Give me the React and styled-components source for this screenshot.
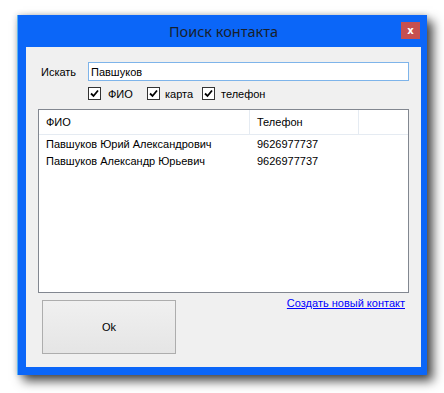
import React from "react";
import styled, { createGlobalStyle } from "styled-components";

const GlobalStyle = createGlobalStyle`
  html, body {
    margin: 0;
    padding: 0;
    background: #ffffff;
  }
  body {
    font-family: "Liberation Sans", Arial, sans-serif;
    font-size: 11px;
    color: #000;
  }
`;

const Desktop = styled.div`
  width: 444px;
  height: 393px;
  padding: 15px 0 0 17px;
  box-sizing: border-box;
  overflow: hidden;
`;

const Window = styled.div`
  width: 410px;
  height: 360px;
  background: #0b66f8;
  display: flex;
  flex-direction: column;
  border-left: 1px solid #5ab4f0;
  box-sizing: border-box;
  box-shadow: 6px 6px 10px rgba(0, 0, 0, 0.7), 0 0 6px rgba(0, 0, 0, 0.2);
`;

const TitleBar = styled.div`
  height: 32px;
  position: relative;
  display: flex;
  align-items: center;
  justify-content: center;
`;

const Title = styled.span`
  font-family: "Segoe UI", "Noto Sans", sans-serif;
  font-size: 14.5px;
  color: #18202c;
  margin-left: 2px;
`;

const CloseButton = styled.div`
  position: absolute;
  right: 7px;
  top: 7px;
  width: 19px;
  height: 17px;
  background: #c75050;
  color: #fff;
  font-family: "DejaVu Sans", sans-serif;
  font-weight: bold;
  font-size: 10px;
  display: flex;
  align-items: center;
  justify-content: center;
`;

const Client = styled.div`
  flex: 1;
  margin: 0 6px 8px 8px;
  background: #f0f0f0;
  padding-top: 15px;
  display: flex;
  flex-direction: column;
`;

const SearchRow = styled.div`
  display: flex;
  align-items: center;
  padding-left: 15px;
`;

const Label = styled.span`
  width: 47px;
`;

const SearchInput = styled.div`
  width: 321px;
  height: 19px;
  box-sizing: border-box;
  border: 1px solid #7eb4ea;
  background: #fff;
  padding-left: 2px;
  display: flex;
  align-items: center;
`;

const CheckRow = styled.div`
  display: flex;
  margin-top: 6px;
  padding-left: 62px;
  height: 13px;
`;

const CheckItem = styled.div`
  display: flex;
  align-items: center;
  gap: ${({ $gap }) => $gap}px;
  width: ${({ $w }) => ($w ? `${$w}px` : "auto")};
`;

const Box = styled.span`
  width: 13px;
  height: 13px;
  box-sizing: border-box;
  border: 1px solid #333;
  background: #fff;
  display: flex;
  align-items: center;
  justify-content: center;
`;

const List = styled.div`
  margin: 9px 0 0 12px;
  width: 371px;
  height: 184px;
  box-sizing: border-box;
  border: 1px solid #828790;
  background: #fff;
`;

const Header = styled.div`
  display: flex;
  height: 25px;
  border-bottom: 1px solid #e5ebf2;
  box-sizing: border-box;
`;

const HeaderCell = styled.div`
  width: ${({ $w }) => $w}px;
  box-sizing: border-box;
  padding-left: 7px;
  display: flex;
  align-items: center;
  border-right: 1px solid #e5ebf2;
`;

const Row = styled.div`
  display: flex;
  height: 17px;
  align-items: center;
`;

const Cell = styled.div`
  width: ${({ $w }) => $w}px;
  box-sizing: border-box;
  padding-left: 7px;
  white-space: nowrap;
`;

const BottomRow = styled.div`
  display: flex;
  padding: 0 16px 0 16px;
`;

const OkButton = styled.div`
  margin-top: 7px;
  width: 134px;
  height: 54px;
  box-sizing: border-box;
  border: 1px solid #adadad;
  background: linear-gradient(#f0f0f0, #e5e5e5);
  display: flex;
  align-items: center;
  justify-content: center;
`;

const Link = styled.span`
  margin-left: auto;
  margin-top: 4px;
  color: #0000ff;
  text-decoration: underline;
`;

const Check = () => (
  <svg width="9" height="9" viewBox="0 0 9 9">
    <path d="M1 4.5 L3.5 7 L8 1.5" fill="none" stroke="#000" strokeWidth="1.8" />
  </svg>
);

const contacts = [
  { name: "Павшуков Юрий Александрович", phone: "9626977737" },
  { name: "Павшуков Александр Юрьевич", phone: "9626977737" },
];

export default function App() {
  return (
    <Desktop>
      <GlobalStyle />
      <Window>
        <TitleBar>
          <Title>Поиск контакта</Title>
          <CloseButton>x</CloseButton>
        </TitleBar>
        <Client>
          <SearchRow>
            <Label>Искать</Label>
            <SearchInput>Павшуков</SearchInput>
          </SearchRow>
          <CheckRow>
            <CheckItem $w={59} $gap={7}>
              <Box><Check /></Box>
              <span>ФИО</span>
            </CheckItem>
            <CheckItem $w={55} $gap={5}>
              <Box><Check /></Box>
              <span>карта</span>
            </CheckItem>
            <CheckItem $gap={6}>
              <Box><Check /></Box>
              <span>телефон</span>
            </CheckItem>
          </CheckRow>
          <List>
            <Header>
              <HeaderCell $w={211}>ФИО</HeaderCell>
              <HeaderCell $w={109}>Телефон</HeaderCell>
            </Header>
            {contacts.map((c, i) => (
              <Row key={i}>
                <Cell $w={211}>{c.name}</Cell>
                <Cell $w={109}>{c.phone}</Cell>
              </Row>
            ))}
          </List>
          <BottomRow>
            <OkButton>Ok</OkButton>
            <Link>Создать новый контакт</Link>
          </BottomRow>
        </Client>
      </Window>
    </Desktop>
  );
}
